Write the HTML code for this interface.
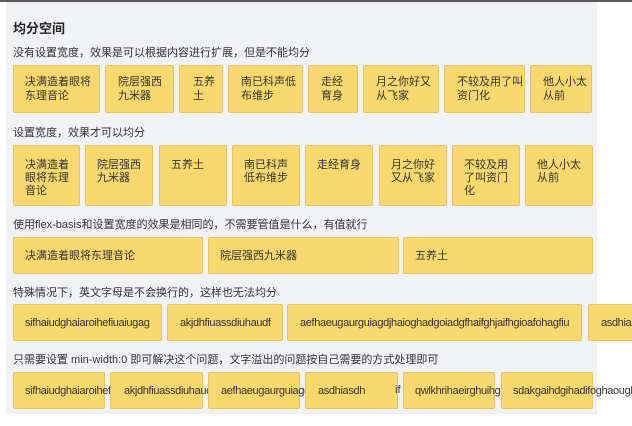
<!DOCTYPE html>
<html><head><meta charset="utf-8"><style>
*{margin:0;padding:0;box-sizing:border-box}
body{width:632px;height:426px;background:#fff;position:relative;overflow:hidden;font-family:"Liberation Sans","Noto Sans CJK SC",sans-serif;color:#333}
.top{position:absolute;left:0;top:0;width:632px;height:2px;background:#5a5a5e}
.panel{position:absolute;left:6px;top:2px;width:591px;height:412px;background:#f0f2f5}
.t{position:absolute;font-size:11px;white-space:nowrap;color:#333}
.h{position:absolute;left:13px;top:18px;font-size:13px;font-weight:bold;color:#222}
.b{position:absolute;background:#f9d96e;border:1px solid #e6c462;border-radius:2px;font-size:11px;line-height:14px;padding-left:11px;color:#333;display:flex;align-items:center;white-space:nowrap}
.w{white-space:normal;align-items:center}
.r2{align-items:flex-start;padding-top:13px;white-space:normal;line-height:13px}
.l{letter-spacing:-0.35px}
</style></head><body>
<div class="top"></div>
<div class="panel"></div>
<div class="h">均分空间</div>
<div class="t" style="left:13px;top:44px">没有设置宽度，效果是可以根据内容进行扩展，但是不能均分</div>
<div class="b w" style="left:13px;top:65px;width:87px;height:48px">决满造着眼将<br>东理音论</div>
<div class="b w" style="left:105px;top:65px;width:69px;height:48px;padding-left:12px">院层强西<br>九米器</div>
<div class="b w" style="left:179px;top:65px;width:44px;height:48px;padding-left:13px">五养<br>土</div>
<div class="b w" style="left:228px;top:65px;width:75px;height:48px;padding-left:12px">南已科声低<br>布维步</div>
<div class="b w" style="left:308px;top:65px;width:50px;height:48px;padding-left:12px">走经<br>育身</div>
<div class="b w" style="left:363px;top:65px;width:76px;height:48px;padding-left:12px">月之你好又<br>从飞家</div>
<div class="b w" style="left:444px;top:65px;width:81px;height:48px;padding-left:12px">不较及用了叫<br>资门化</div>
<div class="b w" style="left:530px;top:65px;width:62px;height:48px;padding-left:12px">他人小太<br>从前</div>
<div class="t" style="left:13px;top:124px">设置宽度，效果才可以均分</div>
<div class="b r2" style="left:13px;top:145px;width:67px;height:61px">决满造着<br>眼将东理<br>音论</div>
<div class="b r2" style="left:85px;top:145px;width:68px;height:61px">院层强西<br>九米器</div>
<div class="b r2" style="left:159px;top:145px;width:68px;height:61px">五养土</div>
<div class="b r2" style="left:232px;top:145px;width:68px;height:61px">南已科声<br>低布维步</div>
<div class="b r2" style="left:305px;top:145px;width:68px;height:61px">走经育身</div>
<div class="b r2" style="left:379px;top:145px;width:68px;height:61px">月之你好<br>又从飞家</div>
<div class="b r2" style="left:452px;top:145px;width:68px;height:61px">不较及用<br>了叫资门<br>化</div>
<div class="b r2" style="left:525px;top:145px;width:68px;height:61px">他人小太<br>从前</div>
<div class="t" style="left:13px;top:216px">使用flex-basis和设置宽度的效果是相同的，不需要管值是什么，有值就行</div>
<div class="b" style="left:13px;top:237px;width:190px;height:37px">决满造着眼将东理音论</div>
<div class="b" style="left:208px;top:237px;width:191px;height:37px">院层强西九米器</div>
<div class="b" style="left:403px;top:237px;width:190px;height:37px">五养土</div>
<div class="t" style="left:13px;top:284px">特殊情况下，英文字母是不会换行的，这样也无法均分</div>
<div class="b l" style="left:13px;top:304px;width:149px;height:37px">sifhaiudghaiaroihefiuaiugag</div>
<div class="b l" style="left:167px;top:304px;width:116px;height:37px;padding-left:12px">akjdhfiuassdiuhaudf</div>
<div class="b l" style="left:287px;top:304px;width:295px;height:37px;padding-left:12px">aefhaeugaurguiagdjhaioghadgoiadgfhaifghjaifhgioafohagfiu</div>
<div class="b l" style="left:588px;top:304px;width:60px;height:37px;padding-left:12px">asdhiasdh</div>
<div class="t" style="left:13px;top:351px">只需要设置 min-width:0 即可解决这个问题，文字溢出的问题按自己需要的方式处理即可</div>
<div class="b l" style="left:13px;top:372px;width:92px;height:37px;overflow:visible">sifhaiudghaiaroihefiuaiugag</div>
<div class="b l" style="left:110px;top:372px;width:93px;height:37px;padding-left:13px">akjdhfiuassdiuhaudf</div>
<div class="b l" style="left:208px;top:372px;width:92px;height:37px;padding-left:12px">aefhaeugaurguiagdjhaio</div>
<div class="b l" style="left:305px;top:372px;width:93px;height:37px;padding-left:12px">asdhiasdh</div>
<div class="t" style="left:395px;top:384px">if</div>
<div class="b l" style="left:403px;top:372px;width:92px;height:37px;padding-left:11px">qwlkhrihaeirghuihg</div>
<div class="b l" style="left:501px;top:372px;width:92px;height:37px;padding-left:11px">sdakgaihdgihadifoghaoughaoi</div>
</body></html>
